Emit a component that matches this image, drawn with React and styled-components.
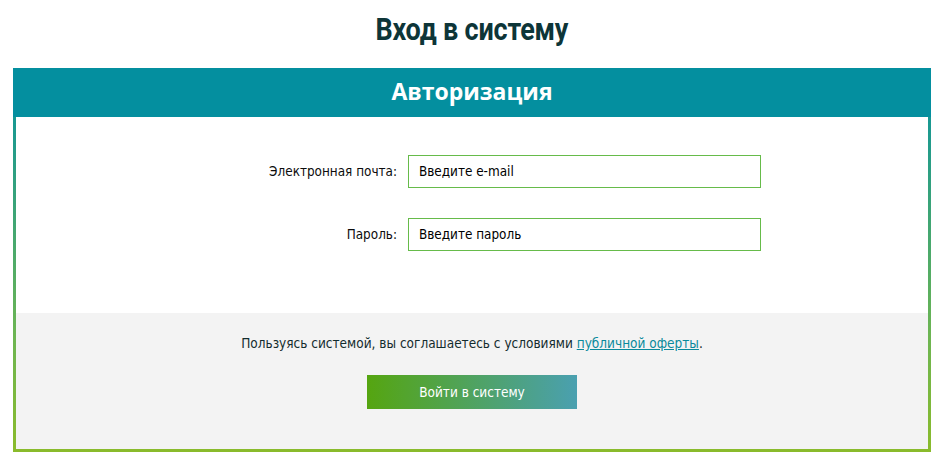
import React from "react";
import styled, { createGlobalStyle } from "styled-components";

const Global = createGlobalStyle`
  html, body { margin: 0; padding: 0; background: #ffffff; }
  body { font-family: "DejaVu Sans Condensed", "DejaVu Sans", sans-serif; }
  * { box-sizing: border-box; }
`;

const Page = styled.div`
  width: 947px;
  padding: 0 16px 10px 13px;
`;

const Title = styled.h1`
  margin: 0;
  height: 68px;
  padding-top: 12px;
  text-align: center;
  font-family: "Roboto", sans-serif;
  font-weight: 700;
  font-size: 31px;
  line-height: 36px;
  color: #0d3538;
`;

const TitleText = styled.span`
  display: inline-block;
  transform: scaleX(0.87);
  letter-spacing: -0.2px;
`;

const Card = styled.div`
  position: relative;
  padding: 0 3px 3px;
  background: linear-gradient(180deg, #048f9f 0%, #1b9990 15%, #6db552 70%, #8abb2b 100%);
`;

const Header = styled.div`
  margin: 0 -3px;
  height: 49px;
  background: #048f9f;
  color: #ffffff;
  text-align: center;
  font-family: "Open Sans", sans-serif;
  font-weight: 700;
  font-size: 23px;
  line-height: 46px;
`;

const Body = styled.div`
  background: #ffffff;
  padding: 38px 0 62px;
  display: flex;
  flex-direction: column;
  gap: 30px;
`;

const Row = styled.div`
  display: grid;
  grid-template-columns: 381px 353px;
  column-gap: 11px;
  align-items: center;
`;

const Label = styled.label`
  text-align: right;
  font-size: 13.4px;
  color: #0c0c0c;
`;

const Input = styled.input`
  height: 33px;
  border: 1px solid #66bb4a;
  padding: 0 10px;
  font-family: inherit;
  font-size: 13.4px;
  color: #000;
  outline: none;
  &::placeholder { color: #000; opacity: 1; }
`;

const Footer = styled.div`
  background: #f3f3f3;
  padding: 20px 0 40px;
  display: flex;
  flex-direction: column;
  align-items: center;
  gap: 22px;
`;

const Terms = styled.p`
  margin: 0;
  font-size: 13.5px;
  color: #132c2e;
  line-height: 20px;
`;

const Link = styled.a`
  color: #0a8a9c;
  text-decoration: underline;
`;

const Button = styled.button`
  width: 210px;
  height: 34px;
  border: none;
  background: linear-gradient(90deg, #55a510 0%, #4aa0b0 100%);
  color: #ffffff;
  font-family: inherit;
  font-size: 13.5px;
  cursor: pointer;
`;

export default function App() {
  return (
    <>
      <Global />
      <Page>
        <Title>
          <TitleText>Вход в систему</TitleText>
        </Title>
        <Card>
          <Header>Авторизация</Header>
          <Body>
            <Row>
              <Label>Электронная почта:</Label>
              <Input type="email" placeholder="Введите e-mail" />
            </Row>
            <Row>
              <Label>Пароль:</Label>
              <Input type="password" placeholder="Введите пароль" />
            </Row>
          </Body>
          <Footer>
            <Terms>
              Пользуясь системой, вы соглашаетесь с условиями <Link href="#">публичной оферты</Link>.
            </Terms>
            <Button>Войти в систему</Button>
          </Footer>
        </Card>
      </Page>
    </>
  );
}
